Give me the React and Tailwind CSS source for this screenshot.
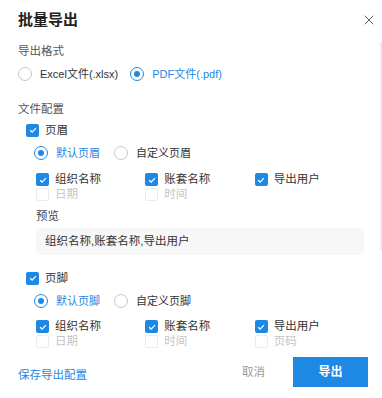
import { X } from "lucide-react";

const BLUE = "#1e88e5";

function Radio({ checked, label }) {
  return (
    <label className="flex items-center gap-[8px] text-[11px] leading-[16px]">
      <span
        className={`flex h-[14px] w-[14px] items-center justify-center rounded-full border ${
          checked ? "border-[#1e88e5]" : "border-[#c8c8c8]"
        }`}
      >
        {checked && <span className="h-[6px] w-[6px] rounded-full bg-[#1e88e5]" />}
      </span>
      <span className={checked ? "text-[#1e88e5]" : "text-[#333]"}>{label}</span>
    </label>
  );
}

function Check({ checked, disabled, label }) {
  return (
    <label className="flex h-[15px] items-center gap-[6px] leading-[15px]">
      <span
        className={`flex h-[13px] w-[13px] shrink-0 items-center justify-center rounded-[2px] ${
          checked ? "bg-[#1e88e5]" : "border border-[#ececec] bg-white"
        }`}
      >
        {checked && (
          <svg viewBox="0 0 12 12" className="h-[10px] w-[10px]">
            <path d="M2.5 6.2 L5 8.5 L9.5 3.8" fill="none" stroke="white" strokeWidth="1.5" />
          </svg>
        )}
      </span>
      <span className={disabled ? "text-[#c4c4c4]" : "text-[#333]"}>{label}</span>
    </label>
  );
}

function Fields({ last }) {
  const cols = [
    ["组织名称", "日期"],
    ["账套名称", "时间"],
    ["导出用户", last],
  ];
  return (
    <div className="flex pl-[36px]">
      {cols.map(([a, b]) => (
        <div key={a} className="flex w-[112px] flex-col">
          <Check checked label={a} />
          {b ? <Check disabled label={b} /> : <span className="h-[15px]" />}
        </div>
      ))}
    </div>
  );
}

export default function App() {
  return (
    <div
      className="relative h-[398px] w-[382px] overflow-hidden bg-white text-[11.5px] text-[#333]"
      style={{ fontFamily: '"Liberation Sans", "Noto Sans CJK SC", sans-serif' }}
    >
      <div className="flex h-[40px] items-center justify-between pl-[18px] pr-[5px]">
        <h1 className="text-[15px] font-bold leading-[20px] text-[#222]">批量导出</h1>
        <X className="h-[16px] w-[16px] text-[#444]" strokeWidth={1.3} />
      </div>
      <div className="absolute right-0 top-[42px] h-[208px] w-[2px] bg-[#ececec]" />

      <div className="px-[18px]">
        <div className="mt-[2px] leading-[18px] text-[#555]">导出格式</div>
        <div className="mt-[5px] flex h-[18px] items-center gap-[12px]">
          <Radio label="Excel文件(.xlsx)" />
          <Radio checked label="PDF文件(.pdf)" />
        </div>

        <div className="mt-[17px] leading-[18px] text-[#555]">文件配置</div>

        <div className="mt-[3px] pl-[8px]">
          <div className="flex h-[18px] items-center">
            <Check checked label="页眉" />
          </div>
          <div className="mt-[5px] flex h-[18px] items-center gap-[14px] pl-[8px]">
            <Radio checked label="默认页眉" />
            <Radio label="自定义页眉" />
          </div>
        </div>

        <div className="mt-[10px] -ml-[18px]">
          <Fields />
        </div>

        <div className="mt-[5px] pl-[18px] leading-[18px] text-[#444]">预览</div>
        <div className="ml-[18px] mt-[3px] flex h-[27px] items-center rounded-[4px] bg-[#f7f7f7] px-[9px] text-[#333]">
          组织名称,账套名称,导出用户
        </div>

        <div className="mt-[14px] pl-[8px]">
          <div className="flex h-[18px] items-center">
            <Check checked label="页脚" />
          </div>
          <div className="mt-[5px] flex h-[18px] items-center gap-[14px] pl-[8px]">
            <Radio checked label="默认页脚" />
            <Radio label="自定义页脚" />
          </div>
        </div>

        <div className="mt-[9px] -ml-[18px]">
          <Fields last="页码" />
        </div>
      </div>

      <div className="mt-[8px] flex items-center justify-between pl-[18px] pr-[14px]">
        <button className="mt-[6px] text-[11.5px] leading-[16px]" style={{ color: BLUE }}>保存导出配置</button>
        <div className="flex items-center gap-[28px]">
          <button className="text-[11.5px] leading-[16px] text-[#999]">取消</button>
          <button className="h-[30px] w-[75px] text-[12px] font-bold text-white" style={{ background: BLUE }}>
            导出
          </button>
        </div>
      </div>
    </div>
  );
}
